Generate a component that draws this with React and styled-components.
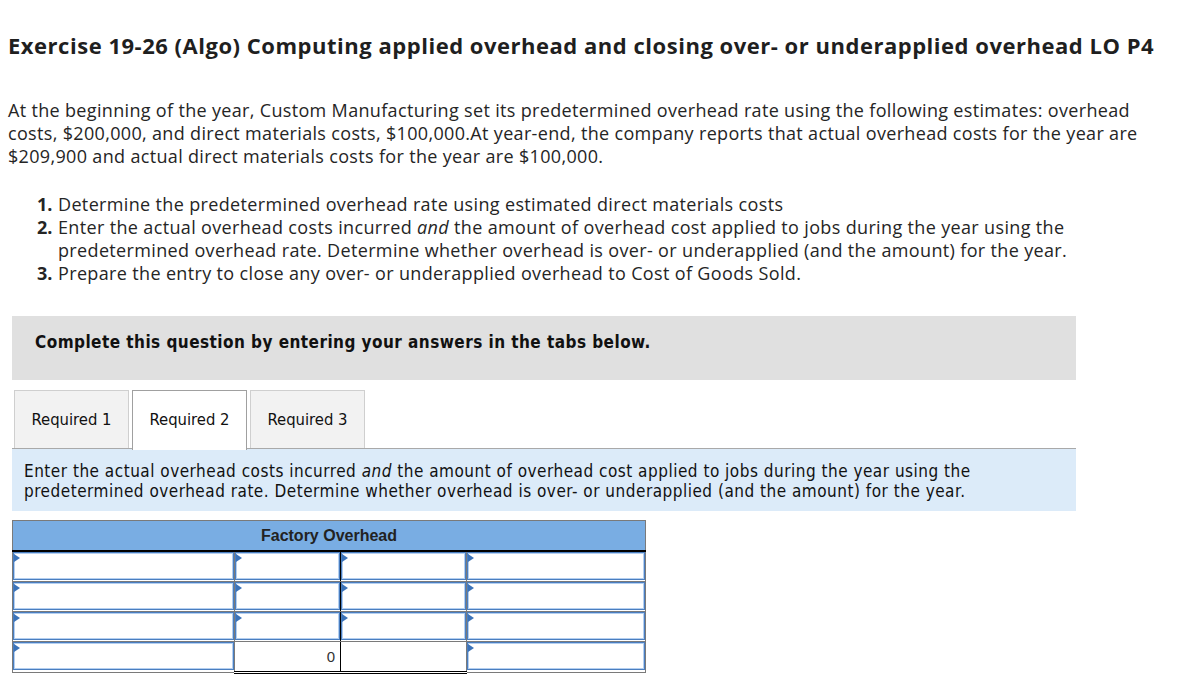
import React from "react";
import styled, { createGlobalStyle } from "styled-components";

const GlobalStyle = createGlobalStyle`
  html, body {
    margin: 0;
    padding: 0;
    background: #fff;
  }
  body {
    font-family: "Open Sans", "Liberation Sans", sans-serif;
    color: #1e1e1e;
  }
`;

const rows = [
  [true, true, true, true],
  [true, true, true, true],
  [true, true, true, true],
];

function App() {
  return (
    <>
      <GlobalStyle />
      <Page>
        <Title>
          Exercise 19-26 (Algo) Computing applied overhead and closing over- or
          underapplied overhead LO P4
        </Title>
        <Intro>
          At the beginning of the year, Custom Manufacturing set its
          predetermined overhead rate using the following estimates: overhead
          costs, $200,000, and direct materials costs, $100,000.At year-end, the
          company reports that actual overhead costs for the year are $209,900
          and actual direct materials costs for the year are $100,000.
        </Intro>
        <Steps>
          <li>
            <b>1.</b>
            <span>
              Determine the predetermined overhead rate using estimated direct
              materials costs
            </span>
          </li>
          <li>
            <b>2.</b>
            <span>
              Enter the actual overhead costs incurred <i>and</i> the amount of
              overhead cost applied to jobs during the year using the
              predetermined overhead rate. Determine whether overhead is over-
              or underapplied (and the amount) for the year.
            </span>
          </li>
          <li>
            <b>3.</b>
            <span>
              Prepare the entry to close any over- or underapplied overhead to
              Cost of Goods Sold.
            </span>
          </li>
        </Steps>

        <Notice>
          Complete this question by entering your answers in the tabs below.
        </Notice>

        <TabBar>
          <Tab>Required 1</Tab>
          <Tab $active>Required 2</Tab>
          <Tab>Required 3</Tab>
        </TabBar>

        <Info>
          Enter the actual overhead costs incurred <i>and</i> the amount of
          overhead cost applied to jobs during the year using the
          <br />
          predetermined overhead rate. Determine whether overhead is over- or
          underapplied (and the amount) for the year.
        </Info>

        <TAccount>
          <colgroup>
            <col style={{ width: 222 }} />
            <col style={{ width: 106 }} />
            <col style={{ width: 126 }} />
            <col style={{ width: 179 }} />
          </colgroup>
          <thead>
            <tr>
              <HeadCell colSpan={4}>Factory Overhead</HeadCell>
            </tr>
          </thead>
          <tbody>
            {rows.map((r, i) => (
              <tr key={i}>
                {r.map((_, j) => (
                  <Cell key={j} $divider={j === 1}>
                    <Entry />
                  </Cell>
                ))}
              </tr>
            ))}
            <tr>
              <Cell>
                <Entry />
              </Cell>
              <TotalCell $divider>0</TotalCell>
              <TotalCell />
              <Cell>
                <Entry />
              </Cell>
            </tr>
          </tbody>
        </TAccount>
      </Page>
    </>
  );
}

export default App;

const Page = styled.div`
  padding: 33px 8px 0 8px;
`;

const Title = styled.h1`
  margin: 0;
  font-size: 22px;
  line-height: 24px;
  font-weight: 700;
  letter-spacing: 0.52px;
  color: #1f1f1f;
`;

const Intro = styled.p`
  margin: 42px 0 0 0;
  font-size: 18px;
  line-height: 23px;
  letter-spacing: 0.33px;
  color: #252525;
`;

const Steps = styled.ol`
  list-style: none;
  margin: 25px 0 0 0;
  padding: 0 0 0 29px;
  font-size: 18px;
  line-height: 23px;
  letter-spacing: 0.35px;
  color: #252525;

  li {
    display: flex;
  }
  b {
    flex: 0 0 21px;
    letter-spacing: 0;
  }
`;

const Notice = styled.div`
  margin: 31px 0 0 4px;
  width: 1064px;
  height: 64px;
  box-sizing: border-box;
  padding: 16px 23px 0;
  background: #e0e0e0;
  font-family: "DejaVu Sans Condensed", "DejaVu Sans", sans-serif;
  font-stretch: condensed;
  font-weight: 700;
  font-size: 17px;
  line-height: 20px;
  letter-spacing: 0.45px;
  color: #111;
`;

const TabBar = styled.div`
  margin: 10px 0 0 4px;
  width: 1064px;
  display: flex;
  gap: 3px;
  padding-left: 2px;
  box-sizing: border-box;
  border-bottom: 1px solid #a9a9a9;
`;

const Tab = styled.div`
  width: 115px;
  box-sizing: border-box;
  display: flex;
  align-items: center;
  justify-content: center;
  border: 1px solid ${(p) => (p.$active ? "#a0a0a0" : "#cfcfcf")};
  border-bottom: none;
  background: ${(p) => (p.$active ? "#fff" : "#f2f2f2")};
  margin-bottom: ${(p) => (p.$active ? "-2px" : "0")};
  height: ${(p) => (p.$active ? "60px" : "58px")};
  padding-bottom: ${(p) => (p.$active ? "2px" : "0")};
  font-family: "DejaVu Sans Condensed", "DejaVu Sans", sans-serif;
  font-stretch: condensed;
  font-size: 16.5px;
  color: #111;
`;

const Info = styled.div`
  margin: 0 0 0 4px;
  width: 1064px;
  box-sizing: border-box;
  padding: 12px 12px 10px;
  background: #dcebf9;
  font-family: "DejaVu Sans Condensed", "DejaVu Sans", sans-serif;
  font-stretch: condensed;
  font-size: 17px;
  line-height: 20px;
  letter-spacing: 0.5px;
  color: #111;
`;

const TAccount = styled.table`
  margin: 9px 0 0 4px;
  width: 633px;
  table-layout: fixed;
  border-collapse: collapse;
  border: 1px solid #7a7a7a;
  font-family: "Liberation Sans", Arial, sans-serif;
`;

const HeadCell = styled.th`
  height: 29px;
  padding: 0;
  background: #79ade3;
  border-bottom: 2px solid #000;
  font-size: 16px;
  font-weight: 700;
  color: #222;
  text-align: center;
`;

const Cell = styled.td`
  height: 29px;
  padding: 0;
  border: 1px solid #7a7a7a;
  border-right: 1px solid ${(p) => (p.$divider ? "#000" : "#7a7a7a")};
  vertical-align: top;
`;

const Entry = styled.div`
  position: relative;
  height: 28px;
  box-sizing: border-box;
  border: 1px solid #4a7ec0;
  box-shadow: inset 0 0 0 1px #b4cff0;
  background: #fff;

  &::before {
    content: "";
    position: absolute;
    left: 0;
    top: 1px;
    border-style: solid;
    border-width: 4px 0 4px 6px;
    border-color: transparent transparent transparent #3b73b9;
  }
`;

const TotalCell = styled.td`
  height: 29px;
  padding: 0 5px 0 0;
  border: 1px solid #7a7a7a;
  border-top: 1px solid #000;
  border-bottom: 3px double #000;
  border-right: 1px solid ${(p) => (p.$divider ? "#000" : "#7a7a7a")};
  text-align: right;
  font-size: 15px;
  color: #333;
  background: #fff;
`;
